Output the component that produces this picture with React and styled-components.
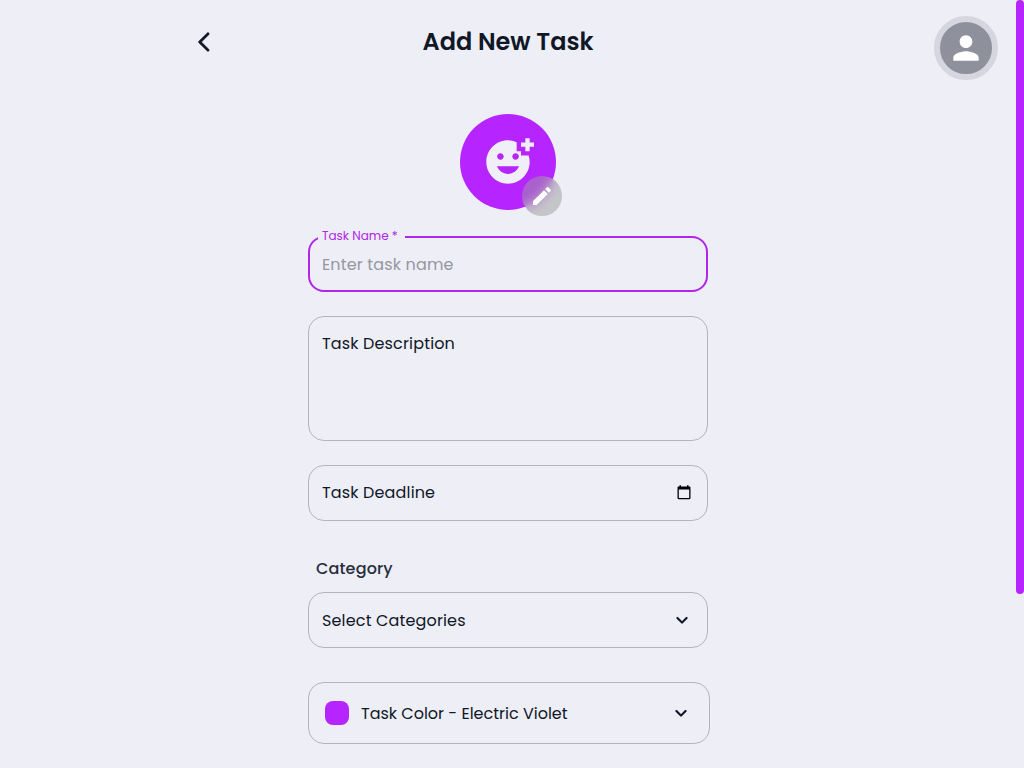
import React from "react";
import styled, { createGlobalStyle } from "styled-components";
import { MdAddReaction, MdPerson } from "react-icons/md";

const Global = createGlobalStyle`
  * { box-sizing: border-box; }
  html { overflow: hidden; }
  body {
    margin: 0;
    height: 768px;
    overflow: hidden;
    background: #edeef6;
    color: #101727;
    font-family: Poppins, Inter, "Open Sans", sans-serif;
    font-size: 16px;
  }
  svg { display: block; flex: none; }
`;

const Page = styled.div`
  position: relative;
  width: 1016px;
  height: 768px;
  overflow: hidden;
`;

const Header = styled.header`
  display: grid;
  grid-template-columns: 192px 1fr 192px;
  align-items: center;
  height: 84px;
`;

const BackButton = styled.button`
  justify-self: end;
  display: flex;
  margin-right: -24px;
  padding: 0;
  border: 0;
  background: none;
  color: #101727;
`;

const Title = styled.h1`
  margin: 0;
  text-align: center;
  font-size: 24px;
  line-height: 36px;
  font-weight: 600;
`;

const Profile = styled.button`
  position: absolute;
  top: 16px;
  right: 18px;
  display: flex;
  align-items: center;
  justify-content: center;
  width: 64px;
  height: 64px;
  padding: 0;
  border: 6px solid #d5d6e0;
  border-radius: 50%;
  background: #8e909b;
  color: #fff;
`;

const Form = styled.main`
  display: flex;
  flex-direction: column;
  width: 400px;
  margin: 30px auto 0;
`;

const EmojiPicker = styled.div`
  position: relative;
  display: flex;
  align-items: center;
  justify-content: center;
  align-self: center;
  width: 96px;
  height: 96px;
  margin-bottom: 26px;
  border-radius: 50%;
  background: #b624ff;
  color: #f0eef6;
`;

const EditBadge = styled.span`
  position: absolute;
  right: -6.4px;
  bottom: -6.4px;
  display: flex;
  align-items: center;
  justify-content: center;
  width: 40px;
  height: 40px;
  border-radius: 50%;
  background: #9c9c9c81;
  backdrop-filter: blur(6px);
  color: #fff;
`;

const Field = styled.div`
  position: relative;
  display: flex;
  align-items: ${(p) => (p.$multiline ? "flex-start" : "center")};
  justify-content: space-between;
  flex: none;
  width: ${(p) => p.$width || 400}px;
  height: ${(p) => p.$height || 56}px;
  margin-bottom: ${(p) => p.$gap || 0}px;
  padding: ${(p) => (p.$multiline ? "14px" : "0")} ${(p) => p.$end || 13}px 0 ${(p) => (p.$focused ? 12 : p.$start || 13)}px;
  border: ${(p) => (p.$focused ? "2px solid #b027ea" : "1px solid #b3b4c0")};
  border-radius: 16px;
`;

const FloatingLabel = styled.label`
  position: absolute;
  top: -11px;
  left: 8px;
  width: 87px;
  padding-left: 4px;
  background: #edeef6;
  color: #b027ea;
  font-size: 12px;
  line-height: 18px;
  letter-spacing: ${(p) => p.$spacing || 0}px;
  white-space: nowrap;
`;

const Text = styled.span`
  padding-top: ${(p) => p.$drop || 0}px;
  line-height: 24px;
  white-space: nowrap;
  letter-spacing: ${(p) => p.$spacing || 0}px;
  color: ${(p) => (p.$muted ? "#9697a2" : "#101727")};
`;

const SectionLabel = styled.h2`
  margin: 0 0 11px 8px;
  font-size: 16px;
  line-height: 24px;
  font-weight: 500;
  color: #282d3b;
  letter-spacing: ${(p) => p.$spacing || 0}px;
`;

const ColorChoice = styled.div`
  display: flex;
  align-items: center;
  gap: 12px;
`;

const Swatch = styled.span`
  width: 24px;
  height: 24px;
  border-radius: 8px;
  background: #b624ff;
`;

const ScrollThumb = styled.div`
  position: fixed;
  top: 0;
  right: 0;
  width: 8px;
  height: 594px;
  border-radius: 4px;
  background: #b624ff;
`;

const BackIcon = () => (
  <svg width="24" height="24" viewBox="0 0 24 24" fill="currentColor" stroke="currentColor" strokeWidth=".35">
    <path d="M16.88 2.88c-.49-.49-1.28-.49-1.77 0L6.7 11.29c-.39.39-.39 1.02 0 1.41l8.41 8.41c.49.49 1.28.49 1.77 0s.49-1.28 0-1.77L9.54 12l7.35-7.35c.48-.49.48-1.28-.01-1.77z" />
  </svg>
);

const EditIcon = () => (
  <svg width="24" height="24" viewBox="0 0 24 24" fill="currentColor">
    <path d="M3 17.46v3.04c0 .28.22.5.5.5h3.04c.13 0 .26-.05.35-.15L17.81 9.94l-3.75-3.75L3.15 17.1c-.1.1-.15.22-.15.36zM20.71 7.04a.996.996 0 0 0 0-1.41l-2.34-2.34a.996.996 0 0 0-1.41 0l-1.83 1.83 3.75 3.75 1.83-1.83z" />
  </svg>
);

const ExpandIcon = () => (
  <svg width="24" height="24" viewBox="0 0 24 24" fill="currentColor" stroke="currentColor" strokeWidth=".15">
    <path d="M15.88 9.29 12 13.17 8.12 9.29a.996.996 0 1 0-1.41 1.41l4.59 4.59c.39.39 1.02.39 1.41 0l4.59-4.59a.996.996 0 0 0 0-1.41c-.39-.38-1.03-.39-1.42 0z" />
  </svg>
);

const CalendarIcon = () => (
  <svg width="16" height="16" viewBox="0 0 16 16" fill="#000">
    <path fillRule="evenodd" d="M3.5.3H5v1.1h6V.3h1.500v1.100h.8c.7 0 1.200.5 1.200 1.200v10.500c0 .7-.5 1.200-1.200 1.200H2.700c-.7 0-1.200-.5-1.200-1.200V2.600c0-.7.5-1.200 1.200-1.200h.8V.3zM2.800 4.600V13h10.400V4.600H2.800z" />
  </svg>
);

export default function App() {
  return (
    <>
      <Global />
      <Page>
        <Header>
          <BackButton aria-label="Back">
            <BackIcon />
          </BackButton>
          <Title>Add New Task</Title>
        </Header>
        <Profile aria-label="Profile">
          <MdPerson size={38} />
        </Profile>
        <Form>
          <EmojiPicker>
            <MdAddReaction size={52} />
            <EditBadge>
              <EditIcon />
            </EditBadge>
          </EmojiPicker>
          <Field $focused $gap={24}>
            <FloatingLabel>Task Name *</FloatingLabel>
            <Text $muted $spacing={0.15} $drop={2}>Enter task name</Text>
          </Field>
          <Field $multiline $height={125} $gap={24}>
            <Text $spacing={0.15} $drop={1}>Task Description</Text>
          </Field>
          <Field $gap={36} $end={15}>
            <Text $spacing={0.15}>Task Deadline</Text>
            <CalendarIcon />
          </Field>
          <SectionLabel $spacing={0.15}>Category</SectionLabel>
          <Field $gap={34}>
            <Text $spacing={0.15} $drop={2}>Select Categories</Text>
            <ExpandIcon />
          </Field>
          <Field $width={402} $height={62} $start={16} $end={16}>
            <ColorChoice>
              <Swatch />
              <Text $drop={2}>Task Color - Electric Violet</Text>
            </ColorChoice>
            <ExpandIcon />
          </Field>
        </Form>
      </Page>
      <ScrollThumb />
    </>
  );
}
